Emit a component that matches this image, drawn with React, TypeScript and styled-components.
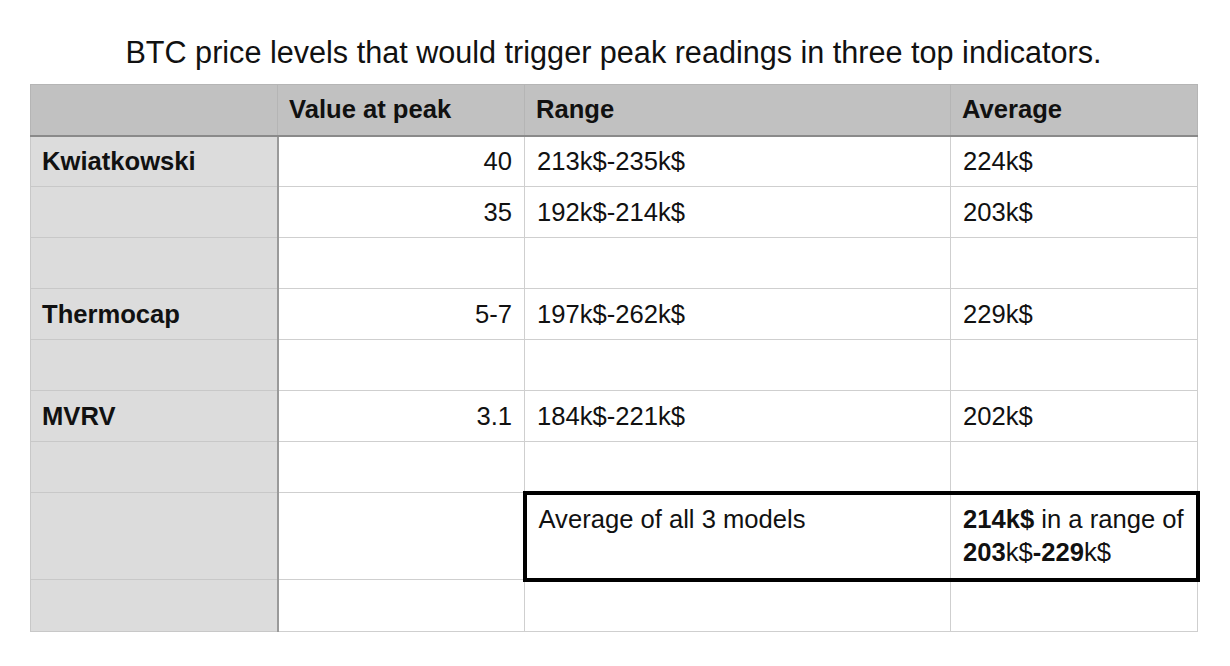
import React from "react";
import styled, { createGlobalStyle } from "styled-components";

const Global = createGlobalStyle`
  html, body { margin: 0; padding: 0; background: #ffffff; }
  body { font-family: "Liberation Sans", Arial, Helvetica, sans-serif; color: #111; }
`;

const Page = styled.div`
  width: 1230px;
  height: 666px;
  box-sizing: border-box;
  padding: 34px 0 0 30px;
  display: flex;
  flex-direction: column;
`;

const Title = styled.h1`
  margin: 0 0 14px 0;
  width: 1167px;
  text-align: center;
  font-size: 30.6px;
  font-weight: 400;
  line-height: 36px;
  color: #111;
`;

const Table = styled.table`
  border-collapse: collapse;
  table-layout: fixed;
  width: 1167px;
  font-size: 25.6px;
`;

const Row = styled.tr<{ $h?: number }>`
  height: ${(p) => p.$h ?? 51}px;
`;

const HeadCell = styled.th`
  background: #c1c1c1;
  text-align: left;
  font-weight: 700;
  padding: 0 11px;
  border: 1px solid #b5b5b5;
  border-bottom: 2px solid #8a8a8a;
  color: #111;
`;

const LabelCell = styled.td`
  background: #dcdcdc;
  font-weight: 700;
  padding: 0 11px;
  border: 1px solid #c8c8c8;
  border-right: 2px solid #9a9a9a;
  vertical-align: middle;
`;

const Cell = styled.td<{ $right?: boolean; $top?: boolean }>`
  padding: ${(p) => (p.$top ? "8px 8px 0 12px" : "0 12px")};
  text-align: ${(p) => (p.$right ? "right" : "left")};
  vertical-align: ${(p) => (p.$top ? "top" : "middle")};
  border: 1px solid #cfcfcf;
  line-height: 33px;
  color: #111;
`;

const BoxCell = styled(Cell)<{ $first?: boolean }>`
  border-top: 4px solid #000;
  border-bottom: 4px solid #000;
  ${(p) => (p.$first ? "border-left: 4px solid #000;" : "border-right: 4px solid #000;")}
`;

const B = styled.b`
  font-weight: 700;
`;

const rows: Array<[string, string, string, string]> = [
  ["Kwiatkowski", "40", "213k$-235k$", "224k$"],
  ["", "35", "192k$-214k$", "203k$"],
  ["", "", "", ""],
  ["Thermocap", "5-7", "197k$-262k$", "229k$"],
  ["", "", "", ""],
  ["MVRV", "3.1", "184k$-221k$", "202k$"],
  ["", "", "", ""],
];

export default function App() {
  return (
    <>
      <Global />
      <Page>
        <Title>BTC price levels that would trigger peak readings in three top indicators.</Title>
        <Table>
          <colgroup>
            <col style={{ width: 247 }} />
            <col style={{ width: 247 }} />
            <col style={{ width: 426 }} />
            <col style={{ width: 247 }} />
          </colgroup>
          <thead>
            <Row>
              <HeadCell />
              <HeadCell>Value at peak</HeadCell>
              <HeadCell>Range</HeadCell>
              <HeadCell>Average</HeadCell>
            </Row>
          </thead>
          <tbody>
            {rows.map((r, i) => (
              <Row key={i}>
                <LabelCell>{r[0]}</LabelCell>
                <Cell $right>{r[1]}</Cell>
                <Cell>{r[2]}</Cell>
                <Cell>{r[3]}</Cell>
              </Row>
            ))}
            <Row $h={87}>
              <LabelCell />
              <Cell />
              <BoxCell $top $first>Average of all 3 models</BoxCell>
              <BoxCell $top>
                <B>214k$</B> in a range of <B>203</B>k$<B>-229</B>k$
              </BoxCell>
            </Row>
            <Row $h={52}>
              <LabelCell />
              <Cell />
              <Cell />
              <Cell />
            </Row>
          </tbody>
        </Table>
      </Page>
    </>
  );
}
